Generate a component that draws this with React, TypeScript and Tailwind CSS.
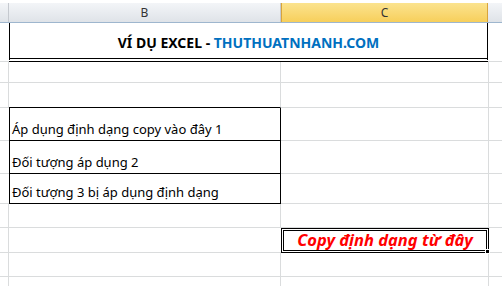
import React from 'react'

// Excel 2010 style sheet fragment
const font = { fontFamily: '"Noto Sans", "Open Sans", sans-serif' }

const grid = 'border-[#dadcdd]'

export default function App() {
  return (
    <div className="w-[502px] h-[286px] overflow-hidden bg-white text-black" style={font}>
      {/* strip above headers */}
      <div className="h-[3px] bg-white" />

      {/* column headers */}
      <div className="flex h-[20px] border-b border-[#9eb6ce]">
        <div className="w-[9px] shrink-0 border-r border-[#c5c9cf] bg-gradient-to-b from-[#f3f5f8] to-[#dfe3e8]" />
        <div className="w-[272px] shrink-0 border-r border-[#c5c9cf] bg-gradient-to-b from-[#f3f5f8] to-[#dfe3e8] flex items-center justify-center text-[12px] text-[#333]">
          B
        </div>
        <div className="w-[207px] shrink-0 border-r border-[#d8a43c] border-l border-l-[#d8a43c] bg-gradient-to-b from-[#fbe38e] to-[#f7cf5a] flex items-center justify-center text-[12px] text-[#333]">
          C
        </div>
        <div className="flex-1 bg-gradient-to-b from-[#f3f5f8] to-[#dfe3e8]" />
      </div>

      {/* row 1: title */}
      <div className="flex h-[39px]">
        <div className={`w-[9px] shrink-0 border-b ${grid}`} />
        <div className="w-[479px] shrink-0 border-l border-r border-black border-b-4 border-double flex items-center justify-center pt-[3px] text-[14px] font-bold">
          <span>VÍ DỤ EXCEL -&nbsp;</span>
          <span className="text-[#0070c0]">THUTHUATNHANH.COM</span>
        </div>
        <div className={`flex-1 border-b ${grid}`} />
      </div>

      {/* row 2 */}
      <Row h="h-[21px]" />
      {/* row 3 */}
      <Row h="h-[25px]" bBottom />

      {/* data rows */}
      <DataRow h="h-[33px]" text="Áp dụng định dạng copy vào đây 1" />
      <DataRow h="h-[33px]" text="Đối tượng áp dụng 2" />
      <DataRow h="h-[30px]" text="Đối tượng 3 bị áp dụng định dạng" />

      {/* row 7 */}
      <Row h="h-[24px]" />

      {/* row 8: copy source */}
      <div className="flex h-[25px]">
        <div className={`w-[9px] shrink-0 border-r border-b ${grid}`} />
        <div className={`w-[272px] shrink-0 border-b ${grid}`} />
        <div className="relative w-[208px] shrink-0 border-[3px] border-double border-black flex items-center justify-center">
          <span className="text-[16.5px] font-bold italic text-[#ff0000] leading-none pb-[1px]">
            Copy định dạng từ đây
          </span>
          <div className="absolute -right-[4px] -bottom-[4px] w-[5px] h-[5px] bg-black border border-white" />
        </div>
        <div className={`flex-1 border-b ${grid}`} />
      </div>

      <Row h="h-[24px]" />
      <Row h="h-[24px]" />
    </div>
  )
}

function Row({ h, bBottom }: { h: string; bBottom?: boolean }) {
  return (
    <div className={`flex ${h}`}>
      <div className={`w-[9px] shrink-0 border-r border-b ${grid}`} />
      <div
        className={`w-[272px] shrink-0 border-r border-b ${grid} ${
          bBottom ? 'border-b-black' : ''
        }`}
      />
      <div className={`w-[208px] shrink-0 border-r border-b ${grid}`} />
      <div className={`flex-1 border-b ${grid}`} />
    </div>
  )
}

function DataRow({ h, text }: { h: string; text: string }) {
  return (
    <div className={`flex ${h}`}>
      <div className={`w-[9px] shrink-0 border-b ${grid}`} />
      <div className="w-[272px] shrink-0 border-l border-r border-b border-black flex items-end pl-[2px] pb-[2px] text-[13px] leading-[18px]">
        {text}
      </div>
      <div className={`w-[208px] shrink-0 border-r border-b ${grid}`} />
      <div className={`flex-1 border-b ${grid}`} />
    </div>
  )
}
